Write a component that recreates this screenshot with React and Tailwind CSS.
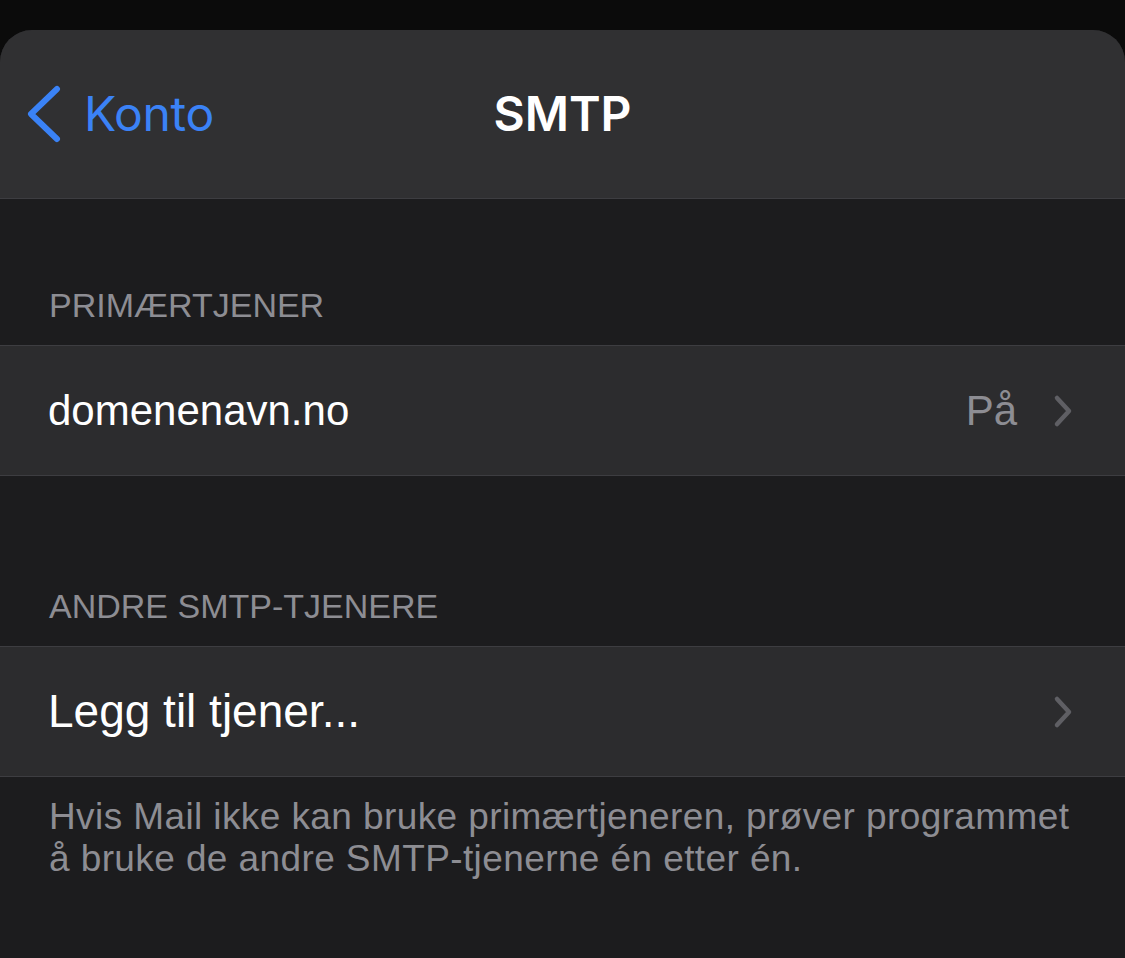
import React from "react";

const Chevron = () => (
  <svg width="20" height="34" viewBox="0 0 20 34" className="shrink-0">
    <path d="M4 4 L16 17 L4 30" fill="none" stroke="#5f5f64" strokeWidth="4.5" strokeLinecap="round" strokeLinejoin="round" />
  </svg>
);

const SectionHeader = ({ children, top }) => (
  <div
    className={`${top} px-[49px] pb-[19px] text-[34px] leading-[42px] text-[#8d8d93]`}
    style={{ fontFamily: "'Liberation Sans', Arial, sans-serif" }}
  >
    {children}
  </div>
);

const Row = ({ label, value, size }) => (
  <div
    className="flex h-[131px] items-center border-y border-[#3d3d41] bg-[#2c2c2e] pl-[48px] pr-[52px]"
    style={{ fontFamily: "'Liberation Sans', Arial, sans-serif" }}
  >
    <span className={`flex-1 ${size} text-white`}>{label}</span>
    {value && <span className={`mr-[36px] ${size} text-[#8d8d93]`}>{value}</span>}
    <Chevron />
  </div>
);

export default function App() {
  return (
    <div className="min-h-screen bg-[#0b0b0b] pt-[30px]" style={{ fontFamily: "Inter, 'Noto Sans', sans-serif" }}>
      <div className="min-h-[928px] overflow-hidden rounded-t-[32px] bg-[#1c1c1e]">
        <div className="relative flex h-[169px] items-center border-b border-[#3d3d41] bg-[#303032]">
          <div className="flex items-center pl-[26px]">
            <svg width="36" height="58" viewBox="0 0 36 58">
              <path d="M31 4 L5 29 L31 54" fill="none" stroke="#3a82f6" strokeWidth="6" strokeLinecap="round" strokeLinejoin="round" />
            </svg>
            <span className="ml-[22px] text-[48px] tracking-[-0.3px] text-[#3b82f6]">Konto</span>
          </div>
          <div className="pointer-events-none absolute inset-x-0 text-center text-[48px] font-semibold text-white">SMTP</div>
        </div>
        <SectionHeader top="pt-[85px]">PRIMÆRTJENER</SectionHeader>
        <Row label="domenenavn.no" value="På" size="text-[42px]" />
        <SectionHeader top="pt-[109px]">ANDRE SMTP-TJENERE</SectionHeader>
        <Row label="Legg til tjener..." size="text-[46px]" />
        <p
          className="px-[49px] pt-[19px] text-[37px] leading-[42px] tracking-[0.4px] text-[#8d8d93]"
          style={{ fontFamily: "'Liberation Sans', Arial, sans-serif" }}
        >
          Hvis Mail ikke kan bruke primærtjeneren, prøver programmet å bruke de andre SMTP-tjenerne én etter én.
        </p>
      </div>
    </div>
  );
}
